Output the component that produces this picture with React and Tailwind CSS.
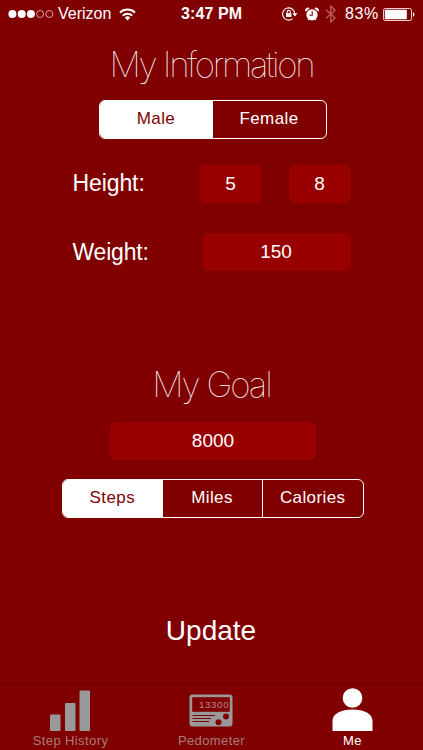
import React, { useState } from 'react';
import clsx from 'clsx';

const StatusBar = () => (
  <div className="flex h-7 shrink-0 items-center pl-[8px] text-[15px] leading-none">
    <svg width="46" height="10" viewBox="0 0 46 10" fill="currentColor">
      <circle cx="4.4" cy="5" r="4" />
      <circle cx="13.7" cy="5" r="4" />
      <circle cx="22.9" cy="5" r="4" />
      <circle cx="32.1" cy="5" r="3.5" fill="none" stroke="#e6b4b4" strokeWidth="0.9" />
      <circle cx="41.3" cy="5" r="3.5" fill="none" stroke="#e6b4b4" strokeWidth="0.9" />
    </svg>
    <span className="ml-[4px] w-[61px] text-[16px]">Verizon</span>
    <svg width="17" height="13" viewBox="0 0 17 13" fill="none" stroke="currentColor" strokeWidth="2">
      <path d="M1 4.6a10.8 10.8 0 0 1 15 0M3.7 7.6a6.9 6.9 0 0 1 9.6 0" />
      <path d="M8.5 12.4 5.8 9.5a4 4 0 0 1 5.4 0Z" fill="currentColor" stroke="none" />
    </svg>
    <span className="ml-[45px] w-[101px] text-[16px] font-bold tracking-[0.1px]">3:47 PM</span>
    {/* rotation lock */}
    <svg width="16" height="14" viewBox="0 0 16 14" fill="none" stroke="currentColor" strokeWidth="1.1">
      <path d="M12.8 7A6.1 6.1 0 1 0 10.6 11.7" />
      <path d="M10.4 6.2h5l-2.5 3.2Z" fill="currentColor" stroke="none" />
      <rect x="4" y="6.2" width="5.4" height="3.8" fill="currentColor" stroke="none" />
      <path d="M5.1 6.2V5a1.6 1.6 0 0 1 3.2 0v1.2" />
    </svg>
    {/* alarm */}
    <svg className="ml-[7px]" width="14" height="15" viewBox="0 0 14 15" fill="currentColor">
      <circle cx="7" cy="7.8" r="5.6" />
      <path d="M.7 4.7A2.6 2.6 0 0 1 4.6 1.3ZM13.3 4.7A2.6 2.6 0 0 0 9.4 1.3Z" />
      <path d="m3.8 12-.7 1M10.2 12l.7 1" stroke="currentColor" strokeWidth="1.3" />
      <path d="M7.2 4.3v3.9H4.4" fill="none" stroke="#800000" strokeWidth="1.1" />
    </svg>
    <svg className="ml-[6px] text-[#b86060]" width="12" height="18" viewBox="0 0 12 18" fill="none" stroke="currentColor" strokeWidth="1.3">
      <path d="m1 4.8 9 8L5.8 17V1L10 5.2l-9 8" />
    </svg>
    <span className="ml-[8px] w-[39px] text-[16px] tracking-[0.6px]">83%</span>
    <svg className="-ml-px" width="32" height="13" viewBox="0 0 32 13" fill="none">
      <rect x="0.5" y="0.5" width="28" height="12" rx="1.8" stroke="#f0d0d0" />
      <rect x="1.8" y="1.8" width="22" height="9.4" rx="0.6" fill="white" />
      <path d="M30 4.3a2.4 2.4 0 0 1 0 4.4Z" fill="white" />
    </svg>
  </div>
);

const Segmented = ({ options, value, onChange, className }) => (
  <div className={clsx('flex h-[39px] overflow-hidden rounded-[6px] border-[1.5px] border-white', className)}>
    {options.map((option, index) => (
      <button
        key={option}
        onClick={() => onChange(option)}
        className={clsx(
          'flex-1 pr-px pb-[2px] text-[17px] tracking-[0.4px]',
          index > 0 && options[index - 1] !== value && 'border-l-[1.5px] border-white',
          option === value ? 'bg-white text-[#800000]' : 'text-white'
        )}
      >
        {option}
      </button>
    ))}
  </div>
);

const Field = ({ value, className }) => (
  <div className={clsx('flex h-[38px] items-center justify-center rounded-[6px] bg-[#980000] text-[19px]', className)}>
    {value}
  </div>
);

const Tab = ({ label, active, children }) => (
  <button className={clsx('flex flex-1 flex-col items-center', active ? 'text-white' : 'text-[#999]')}>
    <div className="flex h-[46px] items-end">{children}</div>
    <span className={clsx('mt-[3px] text-[13px] leading-[14px] tracking-[0.4px]', !active && 'text-[#a87c7c]')}>{label}</span>
  </button>
);

const App = () => {
  const [gender, setGender] = useState('Male');
  const [unit, setUnit] = useState('Steps');

  return (
    <div className="flex h-[750px] w-[423px] flex-col overflow-hidden bg-[#800000] font-['Liberation_Sans',Arial,sans-serif] text-white">
      <StatusBar />

      <main className="flex flex-1 flex-col items-center">
        <h1 className="mt-[14px] h-[45px] font-[Inter,sans-serif] text-[35px] leading-[44px] font-thin tracking-[-2.3px] whitespace-nowrap">
          My Information
        </h1>
        <Segmented className="mt-[13px] ml-[3px] w-[228px]" options={['Male', 'Female']} value={gender} onChange={setGender} />

        <div className="mt-[26px] flex w-[278px] items-center">
          <span className="flex-1 pb-[2px] text-[23px] tracking-[-0.1px]">Height:</span>
          <Field className="w-[62px]" value="5" />
          <Field className="ml-[27px] w-[62px]" value="8" />
        </div>
        <div className="mt-[30px] flex w-[278px] items-center">
          <span className="flex-1 text-[23px] tracking-[-0.2px]">Weight:</span>
          <Field className="w-[149px]" value="150" />
        </div>

        <h1 className="mt-[91px] h-[45px] font-[Inter,sans-serif] text-[35px] leading-[44px] font-thin tracking-[-2px] whitespace-nowrap">
          My Goal
        </h1>
        <Field className="mt-[15px] ml-[3px] w-[206px]" value="8000" />
        <Segmented className="mt-[19px] ml-[3px] w-[302px]" options={['Steps', 'Miles', 'Calories']} value={unit} onChange={setUnit} />

        <button className="mt-[93px] mr-px text-[28px] leading-[40px]">Update</button>
      </main>

      <nav className="flex h-[66px] shrink-0 border-t border-[#680000]">
        <Tab label="Step History">
          <svg className="mr-px" width="40" height="41" viewBox="0 0 40 41" fill="currentColor">
            <rect x="0" y="24.5" width="10.5" height="16.5" rx="1" />
            <rect x="15" y="13" width="10.5" height="28" rx="1" />
            <rect x="29.5" y="0.5" width="10.5" height="40.5" rx="1" />
          </svg>
        </Tab>
        <Tab label="Pedometer">
          <svg className="mr-px mb-[4px]" width="44" height="33" viewBox="0 0 44 33" fill="currentColor">
            <rect x="0.5" y="0.5" width="43" height="32" rx="3" />
            <rect x="3.2" y="3.2" width="37.6" height="14.6" fill="#800000" />
            <text x="10" y="14" fontFamily="Liberation Sans" fontSize="9.6" textLength="29.5" fill="#b88c8c">13300</text>
            <path d="M3.5 21.5H26M3.5 24.5H22M3.5 27.5H20" stroke="#800000" strokeWidth="1.2" />
            <circle cx="37" cy="22.5" r="3" fill="#800000" />
            <circle cx="29.5" cy="28.3" r="3" fill="#800000" />
          </svg>
        </Tab>
        <Tab label="Me" active>
          <svg width="41" height="43" viewBox="0 0 41 43" fill="currentColor">
            <circle cx="20.5" cy="10" r="9.8" />
            <path d="M.5 43V33C.5 25.5 9 21.4 20.5 21.4S40.5 25.5 40.5 33V43Z" />
          </svg>
        </Tab>
      </nav>
    </div>
  );
};

export default App;
